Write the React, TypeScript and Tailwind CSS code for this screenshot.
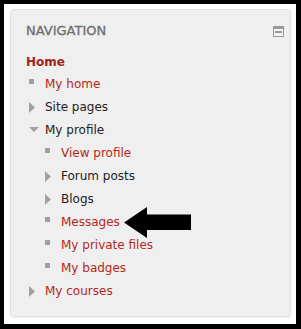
const font = { fontFamily: '"DejaVu Sans", Verdana, sans-serif' }

type Kind = 'leaf' | 'closed' | 'open'

function Marker({ kind }: { kind: Kind }) {
  if (kind === 'leaf') return <span className="block w-[5px] h-[5px] bg-[#a0a0a0] mb-[7px]" />
  if (kind === 'closed')
    return (
      <svg width="6" height="11" viewBox="0 0 6 11" className="mb-[1px]">
        <path d="M0 0 L6 5.5 L0 11 Z" fill="#a0a0a0" />
      </svg>
    )
  return (
    <svg width="10" height="5" viewBox="0 0 10 5" className="mb-[3px]">
      <path d="M0 0 L10 0 L5 5 Z" fill="#a0a0a0" />
    </svg>
  )
}

function Row({ label, kind, link, depth }: { label: string; kind: Kind; link?: boolean; depth: number }) {
  return (
    <div className={`flex items-center h-[23px] ${depth === 1 ? 'pl-[16px]' : ''}`}>
      <div className="w-[19px] flex items-center justify-start pl-[3px]">
        <Marker kind={kind} />
      </div>
      <span className={`text-[12px] leading-[23px] ${link ? 'text-[#b4281b]' : 'text-[#222]'}`}>{label}</span>
    </div>
  )
}

export default function App() {
  return (
    <div className="w-[301px] h-[329px] bg-black pt-[4px] pl-[4px] pr-[5px] pb-[5px] flex" style={font}>
      <div className="flex-1 bg-white pt-[5px] pl-[6px] pr-[5px] pb-[7px] flex">
        <div className="flex-1 bg-[#efefef] border border-[#e2e2e2] rounded-[4px] shadow-[0_1px_2px_rgba(0,0,0,0.08)] pt-[10px] pl-[15px] pr-[6px]">
          {/* header */}
          <div className="flex items-center justify-between h-[22px] mb-[8px]">
            <span className="text-[13px] font-normal text-[#6e6e6e] [-webkit-text-stroke:0.3px_#6e6e6e]">NAVIGATION</span>
            <span className="w-[11px] h-[11px] border border-[#999] bg-[#f4f4f4] flex flex-col mr-[0px]">
              <span className="h-[2px] bg-[#999]" />
              <span className="flex-1 flex items-center justify-center">
                <span className="w-[7px] h-[2px] bg-[#999]" />
              </span>
            </span>
          </div>

          <div className="h-[23px] flex items-center">
            <span className="text-[12px] font-bold text-[#a42318]">Home</span>
          </div>
          <Row label="My home" kind="leaf" link depth={0} />
          <Row label="Site pages" kind="closed" depth={0} />
          <Row label="My profile" kind="open" depth={0} />
          <Row label="View profile" kind="leaf" link depth={1} />
          <Row label="Forum posts" kind="closed" depth={1} />
          <Row label="Blogs" kind="closed" depth={1} />
          <div className="flex items-center h-[23px]">
            <Row label="Messages" kind="leaf" link depth={1} />
            {/* pointer arrow */}
            <svg width="67" height="31" viewBox="0 0 67 31" className="ml-[4px] shrink-0">
              <path d="M0 15.5 L23 0 L23 7.5 L67 7.5 L67 23 L23 23 L23 31 Z" fill="#000" />
            </svg>
          </div>
          <Row label="My private files" kind="leaf" link depth={1} />
          <Row label="My badges" kind="leaf" link depth={1} />
          <Row label="My courses" kind="closed" link depth={0} />
        </div>
      </div>
    </div>
  )
}
